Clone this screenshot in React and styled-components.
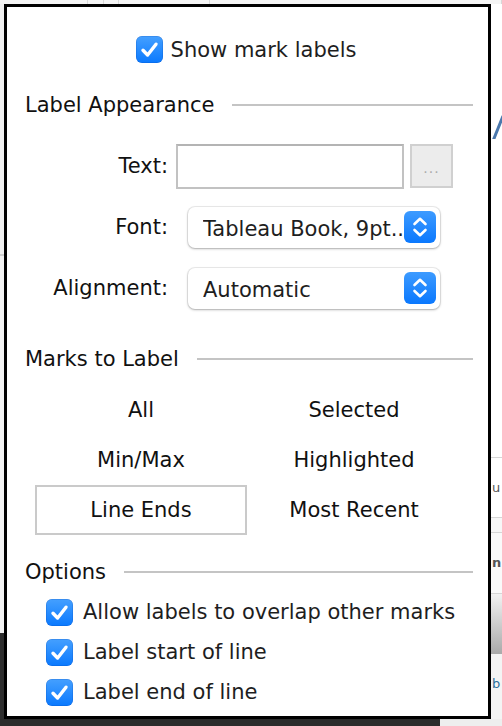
import styled, { createGlobalStyle } from "styled-components";

const GlobalStyle = createGlobalStyle`
  html, body {
    margin: 0;
    padding: 0;
    background: #f2f2f2;
  }
  body {
    font-family: "DejaVu Sans", "Liberation Sans", sans-serif;
    color: #1e1e1e;
  }
`;

function CheckBox() {
  return (
    <Box>
      <svg width="27" height="27" viewBox="0 0 27 27">
        <path
          d="M7 14.2 L11.6 19 L20 8.2"
          fill="none"
          stroke="#fff"
          strokeWidth="3.4"
          strokeLinecap="round"
          strokeLinejoin="round"
        />
      </svg>
    </Box>
  );
}

function Stepper() {
  return (
    <StepperBox>
      <svg width="32" height="32" viewBox="0 0 32 32">
        <path
          d="M10.5 13 L16 7.8 L21.5 13 M10.5 19 L16 24.2 L21.5 19"
          fill="none"
          stroke="#fff"
          strokeWidth="2.6"
          strokeLinecap="round"
          strokeLinejoin="round"
        />
      </svg>
    </StepperBox>
  );
}

function Section({ title, gap }) {
  return (
    <Heading $gap={gap}>
      <span>{title}</span>
      <Rule />
    </Heading>
  );
}

const marks = [
  { label: "All" },
  { label: "Selected" },
  { label: "Min/Max" },
  { label: "Highlighted" },
  { label: "Line Ends", active: true },
  { label: "Most Recent" },
];

const options = [
  "Allow labels to overlap other marks",
  "Label start of line",
  "Label end of line",
];

function App() {
  return (
    <>
      <GlobalStyle />
      <Screen>
        <TopBar>
          <TopCell $w={88} />
          <TopCell $w={15} />
          <TopCell $w={14} />
          <TopCell $w={91} />
          <TopCell $w={294} />
        </TopBar>
        <Middle>
          <LeftRail>
            <RailPart $h={250} $bg="#f0f0f0" />
            <RailPart $h={2} $bg="#cfcfcf" />
            <RailPart $h={377} $bg="#f2f2f2" />
            <RailPart $h={86} $bg="#2e2e2e" />
          </LeftRail>
          <Canvas />
          <RightRail>
            <RailPart $h={135} $bg="#fff">
              <svg width="11" height="135" viewBox="0 0 11 135">
                <path d="M0 142 L12 112" stroke="#4b78ad" strokeWidth="3" />
              </svg>
            </RailPart>
            <RailPart $h={318} $bg="#fff" />
            <RailPart $h={1} $bg="#d6d6d6" />
            <RailPart $h={59} $bg="#fff">
              <RailText>u</RailText>
            </RailPart>
            <RailPart $h={1} $bg="#d6d6d6" />
            <RailPart $h={14} $bg="#f7f7f7" />
            <RailPart $h={1} $bg="#d6d6d6" />
            <RailPart $h={60} $bg="#fafafa">
              <RailText $bold>n</RailText>
            </RailPart>
            <RailPart $h={1} $bg="#d6d6d6" />
            <RailPart $h={60} $bg="linear-gradient(#f2f2f2, #a9a9a9)" />
            <RailPart $h={65} $bg="#f4f4f4">
              <RailText $color="#2e6f9a">b</RailText>
            </RailPart>
          </RightRail>
        </Middle>
        <BottomBar>
          <BottomDark $w={440} />
          <BottomLight />
        </BottomBar>

        <Popup>
          <ShowRow>
            <CheckBox />
            <span>Show mark labels</span>
          </ShowRow>

          <Section title="Label Appearance" gap={30} />

          <Form>
            <FieldLabel>Text:</FieldLabel>
            <TextRow>
              <TextInput />
              <MoreButton>...</MoreButton>
            </TextRow>

            <FieldLabel>Font:</FieldLabel>
            <Select>
              <span>Tableau Book, 9pt..</span>
              <Stepper />
            </Select>

            <FieldLabel>Alignment:</FieldLabel>
            <Select>
              <span>Automatic</span>
              <Stepper />
            </Select>
          </Form>

          <Section title="Marks to Label" gap={36} />

          <MarksGrid>
            {marks.map((m) => (
              <MarkOption key={m.label} $active={m.active}>
                {m.label}
              </MarkOption>
            ))}
          </MarksGrid>

          <Section title="Options" gap={25} />

          <OptionList>
            {options.map((o) => (
              <OptionRow key={o}>
                <CheckBox />
                <span>{o}</span>
              </OptionRow>
            ))}
          </OptionList>
        </Popup>
      </Screen>
    </>
  );
}

export default App;

const Screen = styled.div`
  position: relative;
  width: 502px;
  height: 726px;
  overflow: hidden;

  display: flex;
  flex-direction: column;
`;

const TopBar = styled.div`
  height: 4px;
  display: flex;
  background: #f4f4f4;
`;

const TopCell = styled.div`
  width: ${(p) => p.$w}px;
  border-right: 1px solid #d8d8d8;
`;

const Middle = styled.div`
  height: 715px;
  display: flex;
`;

const LeftRail = styled.div`
  width: 4px;
  display: flex;
  flex-direction: column;
`;

const RightRail = styled.div`
  width: 11px;
  display: flex;
  flex-direction: column;
`;

const RailPart = styled.div`
  height: ${(p) => p.$h}px;
  flex-shrink: 0;
  overflow: hidden;
  background: ${(p) => p.$bg};

  svg {
    display: block;
  }
`;

const RailText = styled.div`
  padding: 22px 0 0 1px;
  font-size: 13px;
  font-weight: ${(p) => (p.$bold ? 700 : 400)};
  color: ${(p) => p.$color || "#555"};
`;

const Canvas = styled.div`
  flex: 1;
  background: #fff;
`;

const BottomBar = styled.div`
  flex: 1;
  display: flex;
`;

const BottomDark = styled.div`
  width: ${(p) => p.$w}px;
  background: #2b2b2b;
`;

const BottomLight = styled.div`
  flex: 1;
  background: #eeeeee;
`;

const Popup = styled.div`
  position: absolute;
  top: 4px;
  left: 4px;
  width: 487px;
  height: 715px;
  box-sizing: border-box;

  padding: 0 15px 0 18px;
  border: 3px solid #000;

  background: #fff;

  display: flex;
  flex-direction: column;

  font-size: 21px;
  color: #1e1e1e;
`;

const Box = styled.div`
  width: 27px;
  height: 27px;
  flex-shrink: 0;

  border-radius: 6px;
  background: linear-gradient(#45a0ff, #0a79fe);
  box-shadow: inset 0 0 0 0.5px rgba(0, 60, 160, 0.35);

  svg {
    display: block;
  }
`;

const ShowRow = styled.div`
  margin-top: 29px;
  height: 27px;

  display: flex;
  align-items: center;
  justify-content: center;
  gap: 8px;
  padding-right: 6px;
`;

const Heading = styled.div`
  height: 24px;
  margin-top: ${(p) => p.$gap}px;

  display: flex;
  align-items: center;

  span {
    color: #111;
    white-space: nowrap;
  }
`;

const Rule = styled.div`
  flex: 1;
  height: 2px;
  margin-left: 18px;
  background: #c4c4c4;
`;

const Form = styled.div`
  margin-top: 26px;

  display: grid;
  grid-template-columns: 143px 1fr;
  grid-auto-rows: 46px;
  row-gap: 15px;
  column-gap: 8px;
  align-items: center;
`;

const FieldLabel = styled.div`
  text-align: right;
  color: #111;
  white-space: nowrap;
`;

const TextRow = styled.div`
  display: flex;
  align-items: center;
  gap: 6px;
`;

const TextInput = styled.div`
  width: 228px;
  height: 45px;
  box-sizing: border-box;

  border: 2px solid #c2c2c2;
  border-top-color: #b4b4b4;
  background: #fff;
`;

const MoreButton = styled.div`
  width: 43px;
  height: 44px;
  box-sizing: border-box;

  border: 2px solid #d0d0d0;
  background: #ececec;

  display: flex;
  align-items: center;
  justify-content: center;
  padding-top: 4px;

  font-size: 14px;
  color: #ababab;
  letter-spacing: 1px;
`;

const Select = styled.div`
  width: 252px;
  height: 41px;
  margin-left: 12px;
  box-sizing: border-box;

  padding: 0 4px 0 15px;
  border-radius: 7px;
  background: #fff;
  box-shadow: 0 0 0 1px rgba(0, 0, 0, 0.07), 0 1px 2.5px rgba(0, 0, 0, 0.28);

  display: flex;
  align-items: center;
  justify-content: space-between;

  span {
    padding-top: 3px;
    white-space: nowrap;
    overflow: hidden;
  }
`;

const StepperBox = styled.div`
  width: 32px;
  height: 32px;
  flex-shrink: 0;

  border-radius: 6px;
  background: linear-gradient(#3d9bff, #0a78fe);

  svg {
    display: block;
  }
`;

const MarksGrid = styled.div`
  margin: 14px 0 0 10px;

  display: grid;
  grid-template-columns: 212px 212px;
  grid-auto-rows: 50px;
  column-gap: 1px;
`;

const MarkOption = styled.div`
  box-sizing: border-box;
  border: 2px solid ${(p) => (p.$active ? "#cacaca" : "transparent")};

  display: flex;
  align-items: center;
  justify-content: center;

  color: #111;
`;

const OptionList = styled.div`
  margin: 8px 0 0 21px;

  display: flex;
  flex-direction: column;
`;

const OptionRow = styled.div`
  height: 40px;

  display: flex;
  align-items: center;
  gap: 10px;
`;
